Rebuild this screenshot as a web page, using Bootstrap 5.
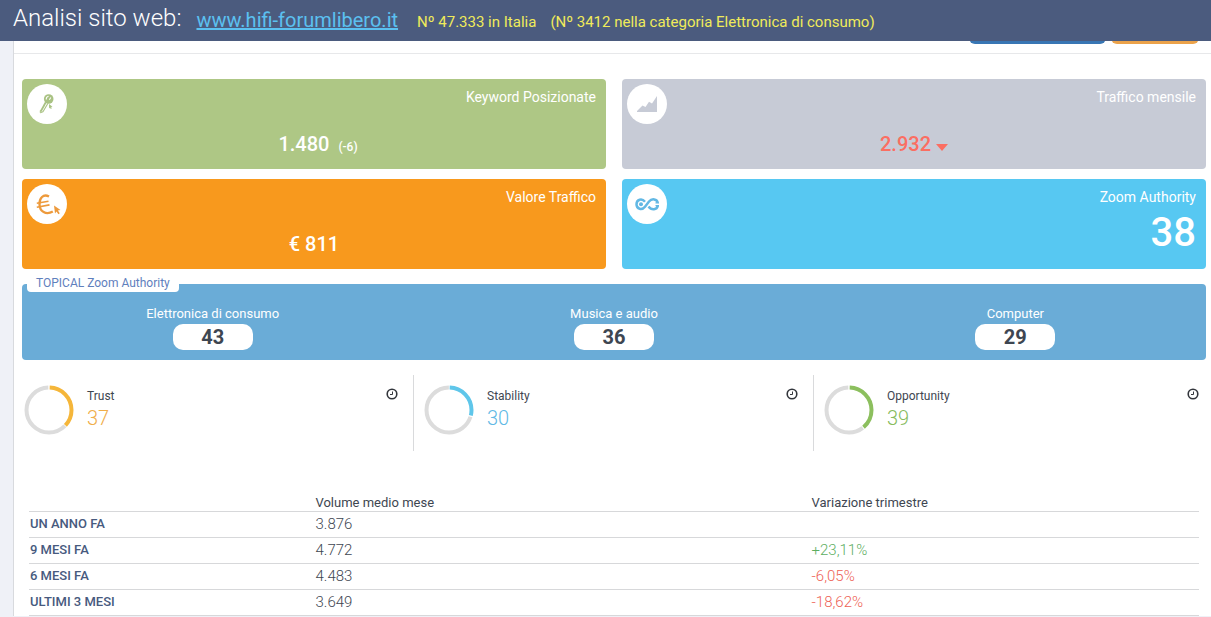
<!DOCTYPE html>
<html lang="it">
<head>
<meta charset="utf-8">
<meta name="viewport" content="width=device-width, initial-scale=1">
<title>Analisi sito web</title>
<link href="https://cdn.jsdelivr.net/npm/bootstrap@5.3.0/dist/css/bootstrap.min.css" rel="stylesheet">
<style>
  body { font-family: Roboto, "Liberation Sans", sans-serif; font-size: 13px; line-height: 20px; color: #3e4651; background: #eff1f7; }
  .topbar { background: #4b5b7e; height: 41px; padding: 0 13px; color: #fff; line-height: 28px; }
  .topbar h1 { font-size: 24px; font-weight: 300; line-height: 28px; margin-right: 15px; }
  .site-info { padding-top: 6px; }
  .site-link { font-size: 20px; color: #5bc0f0; margin-right: 19px; }
  .rank { font-size: 15px; color: #f0eb5a; margin-right: 14px; }
  .panel { margin-left: 13px; border-left: 1px solid #d8dade; background: #fff; overflow: hidden; }
  .actions { height: 54px; padding: 10px 12px 9px; border-bottom: 1px solid #e7e8ea; }
  .actions .btn { height: 34px; }
  .btn-report { width: 137px; background: #3876b4; margin-right: 5px; }
  .btn-export { width: 88px; background: #eba24a; }
  .content-area { padding: 25px 5px 0 8px; }
  .tiles { --bs-gutter-x: 16px; --bs-gutter-y: 10px; }
  .gauges { --bs-gutter-x: 16px; margin-top: 15px; }
  .tile { height: 90px; border-radius: 4px; padding: 5px 10px 5px 5px; color: #fff; }
  .tile-green { background: #aec785; }
  .tile-grey { background: #c7cbd6; }
  .tile-orange { background: #f8991d; }
  .tile-sky { background: #57c8f2; }
  .tile-icon { width: 40px; height: 40px; }
  .tile-title { font-size: 14px; line-height: 26px; }
  .tile-value { font-size: 20px; font-weight: 500; line-height: 24px; margin: 8px 0 0 5px; }
  .tile-value small { font-size: 12px; }
  .tile-big { font-size: 40px; font-weight: 500; line-height: 40px; margin-top: -11px; }
  .down { color: #fb6e62; }
  .topics { background: #6aacd7; border-radius: 4px; height: 76px; margin-top: 15px; padding-top: 20px; }
  .topics .row { --bs-gutter-x: 20px; }
  .topics-tab { top: -11px; left: 5px; height: 19px; padding: 2px 9px 0; border-radius: 4px; font-size: 12px; color: #5f80bd; }
  .topic-score { width: 80px; height: 26px; border-radius: 10px; font-size: 20px; font-weight: 700; line-height: 26px; color: #3e4651; }
  .gauge { height: 76px; padding-top: 8px; }
  .gauge-line { border-right: 1px solid #d9dadc; }
  .gauge-text { margin-left: 11px; }
  .gauge-label { font-size: 12px; line-height: 20px; padding-top: 3px; }
  .gauge-value { font-size: 20px; font-weight: 300; line-height: 24px; }
  .amber { color: #f0ae49; }
  .azure { color: #5fb9e5; }
  .leaf { color: #86bb5c; }
  .clock-btn { width: 12px; height: 12px; margin: 5px 7px 0 0; color: #33363c; }
  .history { margin-top: 40px; padding: 0 7px; }
  .history table { --bs-table-color: #3e4651; --bs-table-bg: transparent; table-layout: fixed; }
  .history th, .history td { height: 26px; padding: 0 1px; border-bottom: 1px solid #d7d8da; }
  .history thead th { height: 20px; font-weight: 400; line-height: 17px; padding-top: 3px; }
  .history tbody th { font-weight: 500; font-size: 13px; line-height: 24px; color: #475a7e; }
  .history tbody td { font-size: 15px; font-weight: 300; line-height: 25px; color: #3e4651; }
  .history tbody td.up { color: #5cae61; }
  .history tbody td.fall { color: #ee5f55; }
  .c-period { width: 24.4%; }
  .c-volume { width: 42.4%; }
</style>
</head>
<body>
<header class="topbar fixed-top">
  <div class="d-flex text-nowrap pt-1">
    <h1 class="mb-0">Analisi sito web:</h1>
    <div class="site-info d-flex align-items-baseline">
      <a class="site-link lh-1" href="#">www.hifi-forumlibero.it</a>
      <span class="rank lh-1">Nº 47.333 in Italia</span>
      <span class="rank lh-1">(Nº 3412 nella categoria Elettronica di consumo)</span>
    </div>
  </div>
</header>

<main class="panel">
  <div class="actions d-flex justify-content-end">
    <button type="button" class="btn btn-report border-0" aria-label="Report"></button>
    <button type="button" class="btn btn-export border-0" aria-label="Esporta"></button>
  </div>

  <div class="content-area">
    <div class="row tiles mt-0">
      <div class="col-6 mt-0">
        <section class="tile tile-green">
          <div class="d-flex justify-content-between">
            <svg class="tile-icon" viewBox="0 0 40 40" aria-hidden="true"><circle cx="20" cy="20" r="20" fill="#fff"/><circle cx="21.700" cy="15" r="4.800" fill="#a9c283"/><path d="M19.300 15.500c-.3-1.800.8-3 2.300-3.200M23.800 13.500l-1.400 2.200" fill="none" stroke="#fff" stroke-width="1.100"/><g fill="none" stroke="#a9c283"><path d="M18.800 18.300 13.700 27.500" stroke-width="1.800"/><path d="M21 19.300 15.800 28" stroke-width="1.100"/><path d="M13.300 26.500v2.300l2.700-1" stroke-width="1"/></g><path d="M22 20l3.500 2.800-1.300.3.500 1.500-1 .4-.6-1.400-1 .8z" fill="#a9c283"/></svg>
            <div class="tile-title">Keyword Posizionate</div>
          </div>
          <div class="tile-value text-center ps-2">1.480 <small class="ms-1">(-6)</small></div>
        </section>
      </div>
      <div class="col-6 mt-0">
        <section class="tile tile-grey">
          <div class="d-flex justify-content-between">
            <svg class="tile-icon" viewBox="0 0 40 40" aria-hidden="true"><circle cx="20" cy="20" r="20" fill="#fff"/><path d="M10 28v-1l5.500-5.500 3 1.500 3.500-5.200 3 1.700L30 12v16z" fill="#c7cbd6"/></svg>
            <div class="tile-title">Traffico mensile</div>
          </div>
          <div class="tile-value text-center down">2.932 <svg width="12" height="7" viewBox="0 0 12 7" aria-hidden="true" class="align-baseline"><path d="M0 0h12L6 7z" fill="currentColor"/></svg></div>
        </section>
      </div>
      <div class="col-6">
        <section class="tile tile-orange">
          <div class="d-flex justify-content-between">
            <svg class="tile-icon" viewBox="0 0 40 40" aria-hidden="true"><circle cx="20" cy="20" r="20" fill="#fff"/><g fill="none" stroke="#ed9a3c" stroke-width="2.300"><path d="M22 12.500c-5.800-3-9.700 1.700-9.500 7.800.1 7.200 6.500 11.200 13.300 7.300"/><path d="M9.800 19.300l11.700-2M9.800 23.300l12.700-2.400" stroke-width="1.600"/></g><path d="M27 21.500l6.500 4.400-2.600.6 1.900 2.700-1.400 1-1.900-2.600-1.500 2z" fill="#ed9a3c"/></svg>
            <div class="tile-title">Valore Traffico</div>
          </div>
          <div class="tile-value text-center">€ 811</div>
        </section>
      </div>
      <div class="col-6">
        <section class="tile tile-sky">
          <div class="d-flex justify-content-between">
            <svg class="tile-icon" viewBox="0 0 40 40" aria-hidden="true"><circle cx="20" cy="20" r="20" fill="#fff"/><g fill="none" stroke="#62b8e4" stroke-width="2.500"><path d="M18 17.700C15 14.100 9.500 15.300 9.500 20.300S15 26.500 18 22.700L22 17.500C25 14 30 15 30.800 18.700"/><path d="M21.500 22.500C24.500 26.500 30 26 30.800 21.800"/></g><path d="M28.500 18.300h3.500v1.300h-3.500zM28.500 21h3.500v1.300h-3.500z" fill="#62b8e4"/><circle cx="14" cy="20.300" r="2" fill="#62b8e4"/></svg>
            <div class="tile-title">Zoom Authority</div>
          </div>
          <div class="tile-big text-end">38</div>
        </section>
      </div>
    </div>

    <section class="topics position-relative">
      <h2 class="topics-tab position-absolute bg-white mb-0 fw-normal text-nowrap d-flex align-items-center">TOPICAL Zoom Authority</h2>
      <div class="row text-center text-white">
        <div class="col-4"><div>Elettronica di consumo</div><div class="topic-score bg-white mx-auto">43</div></div>
        <div class="col-4"><div>Musica e audio</div><div class="topic-score bg-white mx-auto">36</div></div>
        <div class="col-4"><div>Computer</div><div class="topic-score bg-white mx-auto">29</div></div>
      </div>
    </section>

    <div class="row gauges">
      <div class="col-4 gauge-line">
        <div class="gauge d-flex">
          <svg width="54" height="54" viewBox="0 0 54 54" aria-hidden="true"><g fill="none" stroke-width="4" transform="rotate(-90 27 27)"><circle cx="27" cy="27" r="22.500" stroke="#dcdcdc" pathLength="100" stroke-dasharray="62 38" stroke-dashoffset="-37.500"/><circle cx="27" cy="27" r="22.500" stroke="#f5b63a" pathLength="100" stroke-dasharray="36.500 63.500" stroke-dashoffset="-.5"/></g></svg>
          <div class="gauge-text flex-grow-1"><div class="gauge-label">Trust</div><div class="gauge-value amber">37</div></div>
          <button type="button" class="clock-btn btn p-0 border-0 d-flex" aria-label="Storico Trust"><svg width="12" height="12" viewBox="0 0 12 12"><circle cx="6" cy="6" r="4.800" fill="none" stroke="currentColor" stroke-width="1.600"/><path d="M6.500 3.500v3H4" fill="none" stroke="currentColor"/></svg></button>
        </div>
      </div>
      <div class="col-4 gauge-line">
        <div class="gauge d-flex">
          <svg width="54" height="54" viewBox="0 0 54 54" aria-hidden="true"><g fill="none" stroke-width="4" transform="rotate(-90 27 27)"><circle cx="27" cy="27" r="22.500" stroke="#dcdcdc" pathLength="100" stroke-dasharray="70 30" stroke-dashoffset="-29.900"/><circle cx="27" cy="27" r="22.500" stroke="#5fc6ea" pathLength="100" stroke-dasharray="28.500 71.500" stroke-dashoffset="-.5"/></g></svg>
          <div class="gauge-text flex-grow-1"><div class="gauge-label">Stability</div><div class="gauge-value azure">30</div></div>
          <button type="button" class="clock-btn btn p-0 border-0 d-flex" aria-label="Storico Stability"><svg width="12" height="12" viewBox="0 0 12 12"><circle cx="6" cy="6" r="4.800" fill="none" stroke="currentColor" stroke-width="1.600"/><path d="M6.500 3.500v3H4" fill="none" stroke="currentColor"/></svg></button>
        </div>
      </div>
      <div class="col-4">
        <div class="gauge d-flex">
          <svg width="54" height="54" viewBox="0 0 54 54" aria-hidden="true"><g fill="none" stroke-width="4" transform="rotate(-90 27 27)"><circle cx="27" cy="27" r="22.500" stroke="#dcdcdc" pathLength="100" stroke-dasharray="60 40" stroke-dashoffset="-39.500"/><circle cx="27" cy="27" r="22.500" stroke="#8cbf5e" pathLength="100" stroke-dasharray="38.300 61.700" stroke-dashoffset="-.5"/></g></svg>
          <div class="gauge-text flex-grow-1"><div class="gauge-label">Opportunity</div><div class="gauge-value leaf">39</div></div>
          <button type="button" class="clock-btn btn p-0 border-0 d-flex" aria-label="Storico Opportunity"><svg width="12" height="12" viewBox="0 0 12 12"><circle cx="6" cy="6" r="4.800" fill="none" stroke="currentColor" stroke-width="1.600"/><path d="M6.500 3.500v3H4" fill="none" stroke="currentColor"/></svg></button>
        </div>
      </div>
    </div>

    <div class="history">
      <table class="table mb-0">
        <colgroup><col class="c-period"><col class="c-volume"><col></colgroup>
        <thead><tr><th></th><th scope="col">Volume medio mese</th><th scope="col">Variazione trimestre</th></tr></thead>
        <tbody>
          <tr><th scope="row">UN ANNO FA</th><td>3.876</td><td></td></tr>
          <tr><th scope="row">9 MESI FA</th><td>4.772</td><td class="up">+23,11%</td></tr>
          <tr><th scope="row">6 MESI FA</th><td>4.483</td><td class="fall">-6,05%</td></tr>
          <tr><th scope="row">ULTIMI 3 MESI</th><td>3.649</td><td class="fall">-18,62%</td></tr>
        </tbody>
      </table>
    </div>
  </div>
</main>
<script src="https://cdn.jsdelivr.net/npm/bootstrap@5.3.0/dist/js/bootstrap.bundle.min.js"></script>
</body>
</html>
